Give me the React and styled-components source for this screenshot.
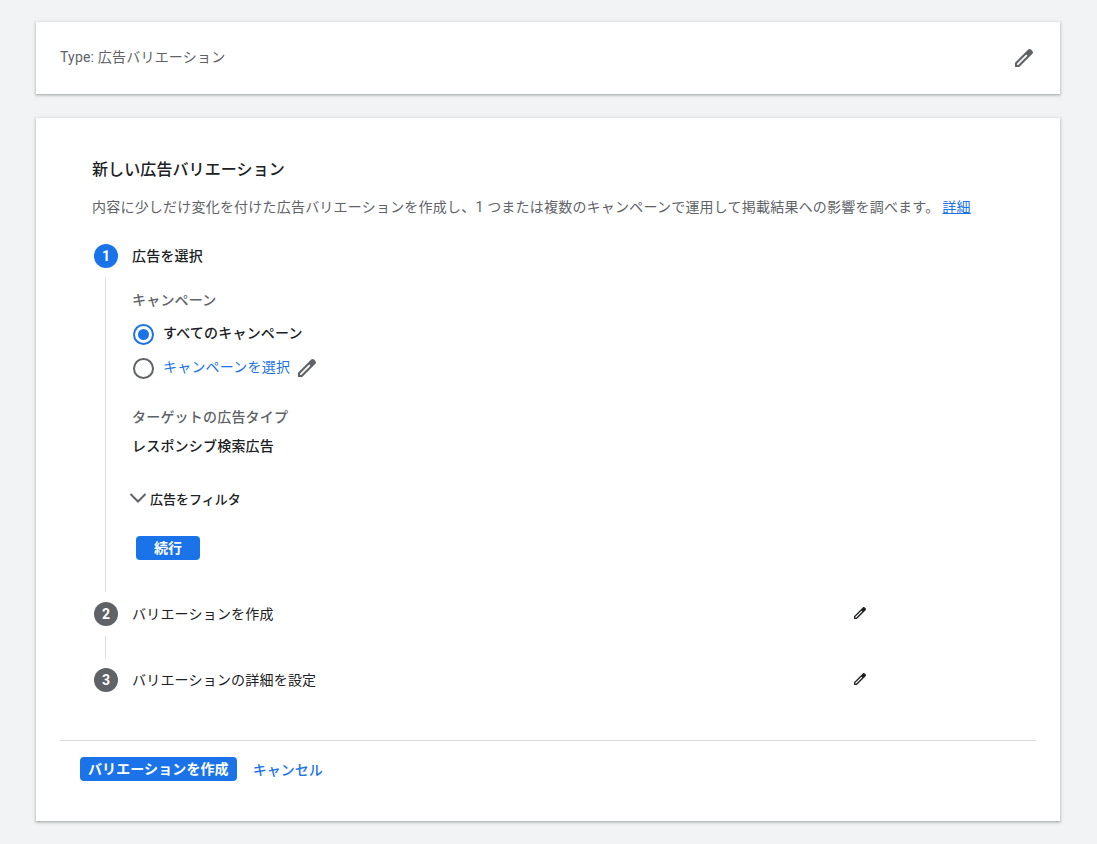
import React from "react";
import styled, { createGlobalStyle } from "styled-components";

const GlobalStyle = createGlobalStyle`
  html, body { margin: 0; padding: 0; }
  body {
    background: #f1f3f4;
    font-family: Roboto, "Noto Sans CJK JP", sans-serif;
    font-size: 14px;
    color: #202124;
  }
`;

const PageWrap = styled.div`
  display: flex;
  flex-direction: column;
  gap: 24px;
  padding: 22px 37px 22px 36px;
`;

const Card = styled.section`
  background: #fff;
  box-shadow: 0 1px 2px rgba(60, 64, 67, 0.3), 0 1px 3px 1px rgba(60, 64, 67, 0.15);
`;

const TypeCard = styled(Card)`
  height: 72px;
  display: flex;
  align-items: center;
  justify-content: space-between;
  padding: 0 24px;
  box-sizing: border-box;
`;

const TypeText = styled.div`
  color: #5f6368;
  line-height: 20px;
  margin-top: -3px;
  letter-spacing: 0.2px;
`;

const Pencil = ({ size, color }) => (
  <svg width={size} height={size} viewBox="0 0 24 24" fill={color} fillRule="evenodd" style={{ display: "block", flex: "none" }}>
    <path d="M3 21v-4.2L16.2 3.6c.8-.8 2-.8 2.8 0l1.4 1.4c.8.8.8 2 0 2.8L7.2 21H3zM5 19h1.2L15.4 9.8l-1.2-1.2L5 17.8V19z" />
  </svg>
);

const MainBody = styled.div`
  padding: 40px 24px 0 56px;
`;

const Title = styled.h1`
  margin: 0;
  font-size: 16px;
  font-weight: 500;
  line-height: 24px;
  letter-spacing: 0.1px;
  color: #202124;
`;

const Description = styled.p`
  margin: 15px 0 0;
  line-height: 20px;
  letter-spacing: 0.21px;
  color: #5f6368;
`;

const TextLink = styled.a`
  color: #1a73e8;
  text-decoration: underline;
  margin-left: 3px;
`;

const Steps = styled.div`
  margin-top: 27px;
  margin-left: 2px;
`;

const StepHead = styled.div`
  display: flex;
  align-items: center;
  height: 24px;
  width: 774px;
`;

const StepBadge = styled.div`
  width: 24px;
  height: 24px;
  border-radius: 50%;
  background: ${(p) => (p.$active ? "#1a73e8" : "#5f6368")};
  color: #fff;
  font-size: 14px;
  font-weight: 700;
  display: flex;
  align-items: center;
  justify-content: center;
  flex: none;
`;

const StepLabel = styled.div`
  margin-left: 14px;
  flex: 1;
  font-weight: ${(p) => (p.$active ? 500 : 400)};
  line-height: 20px;
  letter-spacing: 0.2px;
`;

const StepEdit = styled.span`
  margin-top: -3px;
`;

const StepRail = styled.div`
  margin: 10px 0 10px 11px;
  padding: ${(p) => (p.$open ? "12px 0 32px 26px" : "0 0 0 26px")};
  border-left: 1px solid #dadce0;
  min-height: ${(p) => p.$height || 0}px;
  box-sizing: border-box;
`;

const FieldLabel = styled.div`
  color: #5f6368;
  line-height: 20px;
  font-weight: 500;
  letter-spacing: 0.2px;
`;

const RadioList = styled.div`
  margin-top: 7px;
`;

const RadioRow = styled.div`
  display: flex;
  align-items: center;
  height: 34px;
`;

const RadioMark = styled.span`
  width: 21px;
  height: 21px;
  margin-left: 1px;
  border-radius: 50%;
  border: 2px solid ${(p) => (p.$on ? "#1a73e8" : "#5f6368")};
  box-sizing: border-box;
  display: flex;
  align-items: center;
  justify-content: center;
  flex: none;

  &::after {
    content: "";
    display: ${(p) => (p.$on ? "block" : "none")};
    width: 11px;
    height: 11px;
    border-radius: 50%;
    background: #1a73e8;
  }
`;

const RadioText = styled.span`
  margin-left: 9px;
  line-height: 20px;
  font-weight: 500;
  letter-spacing: 0.2px;
  color: #202124;
  margin-top: -2px;
`;

const RadioLink = styled(RadioText)`
  color: #1a73e8;
  font-weight: 400;
  margin-right: 5px;
`;

const TargetBlock = styled.div`
  margin-top: 22px;
`;

const TargetValue = styled.div`
  margin-top: 9px;
  font-weight: 500;
  line-height: 20px;
  letter-spacing: 0.2px;
`;

const FilterRow = styled.div`
  display: flex;
  align-items: center;
  gap: 3px;
  margin-top: 30px;
  height: 24px;
  margin-left: -3px;
  font-size: 13px;
  font-weight: 500;
`;

const PrimaryButton = styled.button`
  height: 24px;
  border: 0;
  border-radius: 4px;
  padding: 0 8px;
  background: #1a73e8;
  color: #fff;
  font: 700 14px Roboto, "Noto Sans CJK JP", sans-serif;
  line-height: 24px;
  letter-spacing: 0.1px;
`;

const ContinueButton = styled(PrimaryButton)`
  display: block;
  margin: 26px 0 0 4px;
  width: 64px;
`;

const Divider = styled.hr`
  border: 0;
  border-top: 1px solid #dadce0;
  margin: 48px 24px 0;
`;

const Footer = styled.div`
  display: flex;
  align-items: center;
  gap: 16px;
  padding: 16px 44px 40px;
`;

const CancelLink = styled.span`
  color: #1a73e8;
  font-weight: 500;
`;

const Step = ({ n, label, active, edit }) => (
  <StepHead>
    <StepBadge $active={active}>{n}</StepBadge>
    <StepLabel $active={active}>{label}</StepLabel>
    {edit && (
      <StepEdit>
        <Pencil size={16} color="#202124" />
      </StepEdit>
    )}
  </StepHead>
);

export default function App() {
  return (
    <PageWrap>
      <GlobalStyle />
      <TypeCard>
        <TypeText>Type: 広告バリエーション</TypeText>
        <Pencil size={24} color="#5f6368" />
      </TypeCard>
      <Card>
        <MainBody>
          <Title>新しい広告バリエーション</Title>
          <Description>
            内容に少しだけ変化を付けた広告バリエーションを作成し、1 つまたは複数のキャンペーンで運用して掲載結果への影響を調べます。
            <TextLink>詳細</TextLink>
          </Description>
          <Steps>
            <Step n="1" label="広告を選択" active />
            <StepRail $open>
              <FieldLabel>キャンペーン</FieldLabel>
              <RadioList>
                <RadioRow>
                  <RadioMark $on />
                  <RadioText>すべてのキャンペーン</RadioText>
                </RadioRow>
                <RadioRow>
                  <RadioMark />
                  <RadioLink>キャンペーンを選択</RadioLink>
                  <Pencil size={24} color="#5f6368" />
                </RadioRow>
              </RadioList>
              <TargetBlock>
                <FieldLabel>ターゲットの広告タイプ</FieldLabel>
                <TargetValue>レスポンシブ検索広告</TargetValue>
              </TargetBlock>
              <FilterRow>
                <svg width="18" height="18" viewBox="0 0 18 18" fill="none" stroke="#5f6368" strokeWidth="2">
                  <path d="M1.5 5l7.5 7.5L16.5 5" />
                </svg>
                広告をフィルタ
              </FilterRow>
              <ContinueButton>続行</ContinueButton>
            </StepRail>
            <Step n="2" label="バリエーションを作成" edit />
            <StepRail $height={22} />
            <Step n="3" label="バリエーションの詳細を設定" edit />
          </Steps>
        </MainBody>
        <Divider />
        <Footer>
          <PrimaryButton>バリエーションを作成</PrimaryButton>
          <CancelLink>キャンセル</CancelLink>
        </Footer>
      </Card>
    </PageWrap>
  );
}
